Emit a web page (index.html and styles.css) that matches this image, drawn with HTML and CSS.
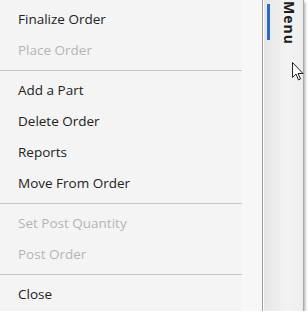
FILE: index.html
```html
<!DOCTYPE html>
<html lang="en">
<head>
    <meta charset="utf-8" />
    <title>Order Menu</title>
    <link rel="stylesheet" href="styles.css">
</head>
<body>
    <div class="frame">
        <div class="menu">
            <ul class="items">
                <li class="item">Finalize Order</li>
                <li class="item disabled">Place Order</li>
                <li class="sep"></li>
                <li class="item">Add a Part</li>
                <li class="item">Delete Order</li>
                <li class="item">Reports</li>
                <li class="item">Move From Order</li>
                <li class="sep"></li>
                <li class="item disabled">Set Post Quantity</li>
                <li class="item disabled">Post Order</li>
                <li class="sep"></li>
                <li class="item">Close</li>
            </ul>
            <div class="gutter"></div>
        </div>
        <div class="tab">
            <span class="bar"></span>
            <span class="label">Menu</span>
        </div>
        <svg class="cursor" width="12" height="19" viewBox="0 0 12 19">
            <path d="M0.5 0.5 L0.5 15.5 L4 12 L6.5 18 L8.5 17 L6 11.5 L11 11.5 Z" fill="#fff" stroke="#222" stroke-width="1" stroke-linejoin="miter" />
        </svg>
    </div>
</body>
</html>
```

FILE: styles.css
```css
body {
    margin: 0;
    background: #ffffff;
    font-family: "Open Sans", "Noto Sans", sans-serif;
}

.frame {
    position: relative;
    display: flex;
    width: 304px;
    height: 311px;
    box-shadow: 1px 2px 3px rgba(0, 0, 0, 0.35);
}

.menu {
    display: flex;
    width: 263px;
    background: #f4f4f4;
    border-right: 1px solid #9c9c9c;
}

.items {
    list-style: none;
    margin: 0;
    padding: 4px 0 0 0;
    width: 242px;
}

.item {
    height: 31px;
    line-height: 30px;
    padding-left: 18px;
    font-size: 13.5px;
    color: #222222;
}

.item.disabled {
    color: #b4b4b4;
}

.sep {
    height: 1px;
    margin: 4px 0;
    background: #c6c6c6;
}

.gutter {
    flex: 1;
    background: #f7f7f7;
}

.tab {
    display: flex;
    width: 39px;
    border-left: 1px solid #ffffff;
    border-right: 1px solid #a8a8a8;
    background: linear-gradient(to right, #e6e6e6, #f3f3f3 60%, #eeeeee);
}

.bar {
    width: 3px;
    height: 36px;
    margin: 4px 0 0 3px;
    background: #2a6cc4;
}

.label {
    writing-mode: vertical-rl;
    margin: 1px 0 0 10px;
    font-size: 14px;
    font-weight: 700;
    letter-spacing: 1px;
    color: #1e1e1e;
}

.cursor {
    position: absolute;
    left: 292px;
    top: 62px;
}
```
